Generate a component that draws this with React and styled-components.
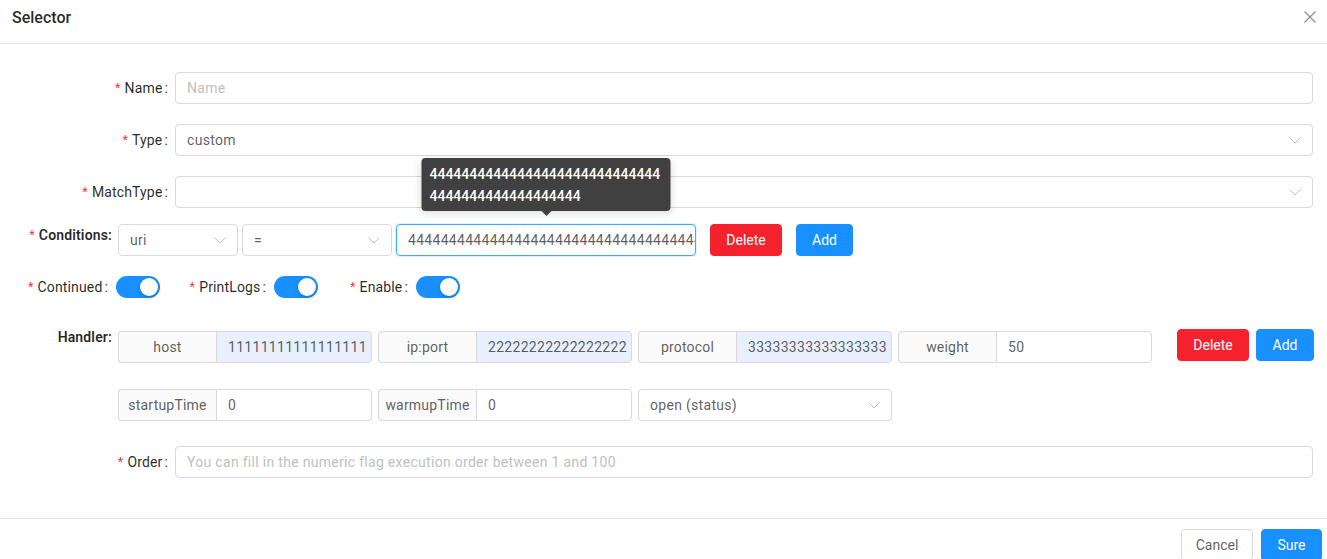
import React from "react";
import styled, { createGlobalStyle, css } from "styled-components";

const Global = createGlobalStyle`
  html, body { margin: 0; padding: 0; background: #fff; overflow: hidden; }
  body { font-family: Roboto, "Liberation Sans", sans-serif; font-size: 14px; color: rgba(0,0,0,0.65); }
  * { box-sizing: border-box; }
`;

const Modal = styled.div`
  width: 1327px;
  background: #fff;
`;

const Header = styled.div`
  height: 44px;
  padding: 0 11px 0 12px;
  border-bottom: 1px solid #e8e8e8;
  display: flex;
  align-items: center;
  justify-content: space-between;
`;

const Title = styled.div`
  font-size: 16px;
  font-weight: 500;
  color: rgba(0,0,0,0.85);
  line-height: 22px;
  margin-top: -8px;
`;

const Close = styled.button`
  border: 0;
  background: transparent;
  padding: 0;
  width: 12px;
  height: 12px;
  display: flex;
  margin-top: -9px;
`;

const Body = styled.div`
  padding: 28px 14px 40px 0;
  display: flex;
  flex-direction: column;
`;

const Item = styled.div`
  display: flex;
  align-items: ${(p) => (p.$top ? "flex-start" : "center")};
  margin-top: ${(p) => p.$mt || 0}px;
  padding-left: ${(p) => p.$pl || 0}px;
  min-height: ${(p) => p.$h || 0}px;
`;

const Label = styled.label`
  width: ${(p) => p.$w}px;
  flex: none;
  text-align: right;
  color: rgba(0,0,0,0.85);
  line-height: 22px;
  white-space: nowrap;
  letter-spacing: 0.15px;
  font-weight: ${(p) => (p.$bold ? 600 : 400)};
  padding-right: ${(p) => p.$pr ?? 7}px;
  margin-top: ${(p) => p.$mt || 0}px;
`;

const Req = styled.span`
  color: #f5222d;
  margin-right: 4px;
  font-family: SimSun, "Liberation Sans", sans-serif;
  font-weight: 400;
`;

const Colon = styled.span`
  margin-left: ${(p) => (p.$tight ? 0 : 2)}px;
`;

const fieldBase = css`
  height: 32px;
  border: 1px solid #d9d9d9;
  border-radius: 4px;
  background: #fff;
  display: flex;
  align-items: center;
  font-size: 14px;
  letter-spacing: 0.3px;
  white-space: nowrap;
  overflow: hidden;
`;

const Field = styled.div`
  ${fieldBase};
  flex: ${(p) => (p.$w ? "none" : "1")};
  width: ${(p) => (p.$w ? `${p.$w}px` : "auto")};
  padding-left: 11px;
  color: ${(p) => (p.$ph ? "#bfbfbf" : "rgba(0,0,0,0.65)")};
  ${(p) =>
    p.$focus &&
    css`
      border-color: #40a9ff;
      box-shadow: 0 0 0 1px rgba(24,144,255,0.12);
    `}
`;

const Select = styled.div`
  ${fieldBase};
  flex: ${(p) => (p.$w ? "none" : "1")};
  width: ${(p) => (p.$w ? `${p.$w}px` : "auto")};
  padding: 0 11px;
  justify-content: space-between;
  color: rgba(0,0,0,0.65);
  margin-right: ${(p) => p.$mr || 0}px;
`;

const Chevron = () => (
  <svg width="12" height="7" viewBox="0 0 12 7" fill="none">
    <polyline points="0.5,0.5 6,6 11.5,0.5" stroke="#bfbfbf" strokeWidth="1" />
  </svg>
);

const Btn = styled.button`
  height: 32px;
  width: ${(p) => p.$w}px;
  flex: none;
  padding: 0;
  border-radius: 4px;
  font-family: inherit;
  font-size: 14px;
  cursor: pointer;
  margin-left: ${(p) => p.$ml || 0}px;
  margin-top: ${(p) => p.$mt || 0}px;
  box-shadow: 0 2px 0 rgba(0,0,0,0.015);
  ${(p) =>
    p.$kind === "danger"
      ? css`
          background: #f5222d;
          border: 1px solid #f5222d;
          color: #fff;
        `
      : p.$kind === "primary"
      ? css`
          background: #1890ff;
          border: 1px solid #1890ff;
          color: #fff;
        `
      : css`
          background: #fff;
          border: 1px solid #d9d9d9;
          color: rgba(0,0,0,0.65);
        `}
`;

const Anchor = styled.div`
  position: relative;
  width: ${(p) => p.$w}px;
  flex: none;
  margin-left: ${(p) => p.$ml || 0}px;
  display: flex;
`;

const Tooltip = styled.div`
  position: absolute;
  left: 50%;
  bottom: calc(100% + 13px);
  transform: translateX(-50%);
  width: 249px;
  padding: 5px 8px 4px;
  background: #404040;
  color: #fff;
  border-radius: 4px;
  font-size: 14px;
  font-weight: 500;
  line-height: 22px;
  box-shadow: 0 2px 8px rgba(0,0,0,0.15);
  word-break: break-all;
  &::after {
    content: "";
    position: absolute;
    left: 50%;
    top: 100%;
    transform: translateX(-50%);
    border-left: 5px solid transparent;
    border-right: 5px solid transparent;
    border-top: 5px solid #404040;
  }
`;

const Line = styled.span`
  display: block;
`;

const SwitchItem = styled.div`
  display: flex;
  align-items: center;
`;

const Switch = styled.div`
  width: 44px;
  height: 22px;
  border-radius: 11px;
  background: #1890ff;
  position: relative;
  flex: none;
  &::after {
    content: "";
    position: absolute;
    top: 2px;
    right: 2px;
    width: 18px;
    height: 18px;
    border-radius: 50%;
    background: #fff;
    box-shadow: 0 2px 4px rgba(0,35,11,0.2);
  }
`;

const Group = styled.div`
  display: flex;
  width: 254px;
  flex: none;
  margin-right: ${(p) => p.$mr || 0}px;
`;

const Addon = styled.div`
  width: 98px;
  flex: none;
  height: 32px;
  border: 1px solid #d9d9d9;
  border-right: 0;
  border-radius: 4px 0 0 4px;
  background: #fafafa;
  display: flex;
  align-items: center;
  justify-content: center;
  letter-spacing: 0.2px;
  color: rgba(0,0,0,0.65);
`;

const GroupInput = styled.div`
  ${fieldBase};
  flex: 1;
  border-radius: 0 4px 4px 0;
  padding-left: 11px;
  color: rgba(0,0,0,0.65);
  background: ${(p) => (p.$auto ? "#e8f0fe" : "#fff")};
`;

const HandlerFields = styled.div`
  display: flex;
  align-items: center;
  margin-top: ${(p) => p.$mt || 0}px;
`;

const Footer = styled.div`
  border-top: 1px solid #e8e8e8;
  padding: 10px 5px 10px;
  display: flex;
  justify-content: flex-end;
  gap: 8px;
`;

const Req2 = ({ children, tight }) => (
  <>
    <Req>*</Req>
    {children}
    <Colon $tight={tight}>:</Colon>
  </>
);

const four = (n) => "4".repeat(n);

export default function App() {
  return (
    <>
      <Global />
      <Modal>
        <Header>
          <Title>Selector</Title>
          <Close aria-label="close">
            <svg width="12" height="12" viewBox="0 0 12 12">
              <path d="M0.5 0.5 L11.5 11.5 M11.5 0.5 L0.5 11.5" stroke="#8c8c8c" strokeWidth="1.1" />
            </svg>
          </Close>
        </Header>
        <Body>
          <Item>
            <Label $w={175}>
              <Req2>Name</Req2>
            </Label>
            <Field $ph>Name</Field>
          </Item>
          <Item $mt={20}>
            <Label $w={175}>
              <Req2>Type</Req2>
            </Label>
            <Select>
              <span>custom</span>
              <Chevron />
            </Select>
          </Item>
          <Item $mt={20}>
            <Label $w={175}>
              <Req2>MatchType</Req2>
            </Label>
            <Select>
              <span></span>
              <Chevron />
            </Select>
          </Item>
          <Item $mt={16} $top>
            <Label $w={118} $bold $pr={6}>
              <Req2 tight>Conditions</Req2>
            </Label>
            <Select $w={120} $mr={4}>
              <span>uri</span>
              <Chevron />
            </Select>
            <Select $w={150} $mr={4}>
              <span>=</span>
              <Chevron />
            </Select>
            <Anchor $w={300}>
              <Tooltip>
                <Line>{four(29)}</Line>
                <Line>{four(19)}</Line>
              </Tooltip>
              <Field $focus>{four(48)}</Field>
            </Anchor>
            <Btn $kind="danger" $w={72} $ml={14}>Delete</Btn>
            <Btn $kind="primary" $w={57} $ml={14}>Add</Btn>
          </Item>
          <Item $mt={20}>
            <SwitchItem>
              <Label $w={116} $pr={8}>
                <Req2>Continued</Req2>
              </Label>
              <Switch />
            </SwitchItem>
            <SwitchItem>
              <Label $w={114} $pr={8}>
                <Req2>PrintLogs</Req2>
              </Label>
              <Switch />
            </SwitchItem>
            <SwitchItem>
              <Label $w={98} $pr={8}>
                <Req2>Enable</Req2>
              </Label>
              <Switch />
            </SwitchItem>
          </Item>
          <Item $mt={28} $top $h={37}>
            <Label $w={118} $bold $pr={6}>
              Handler:
            </Label>
            <HandlerFields $mt={5}>
              <Group $mr={6}>
                <Addon>host</Addon>
                <GroupInput $auto>11111111111111111</GroupInput>
              </Group>
              <Group $mr={6}>
                <Addon>ip:port</Addon>
                <GroupInput $auto>22222222222222222</GroupInput>
              </Group>
              <Group $mr={6}>
                <Addon>protocol</Addon>
                <GroupInput $auto>33333333333333333</GroupInput>
              </Group>
              <Group>
                <Addon>weight</Addon>
                <GroupInput>50</GroupInput>
              </Group>
            </HandlerFields>
            <Btn $kind="danger" $w={72} $ml={25} $mt={3}>Delete</Btn>
            <Btn $kind="primary" $w={58} $ml={7} $mt={3}>Add</Btn>
          </Item>
          <Item $mt={26} $pl={118}>
            <Group $mr={6}>
              <Addon>startupTime</Addon>
              <GroupInput>0</GroupInput>
            </Group>
            <Group $mr={6}>
              <Addon>warmupTime</Addon>
              <GroupInput>0</GroupInput>
            </Group>
            <Select $w={254}>
              <span>open (status)</span>
              <Chevron />
            </Select>
          </Item>
          <Item $mt={25}>
            <Label $w={175}>
              <Req2>Order</Req2>
            </Label>
            <Field $ph>You can fill in the numeric flag execution order between 1 and 100</Field>
          </Item>
        </Body>
        <Footer>
          <Btn $w={72}>Cancel</Btn>
          <Btn $kind="primary" $w={61}>Sure</Btn>
        </Footer>
      </Modal>
    </>
  );
}
